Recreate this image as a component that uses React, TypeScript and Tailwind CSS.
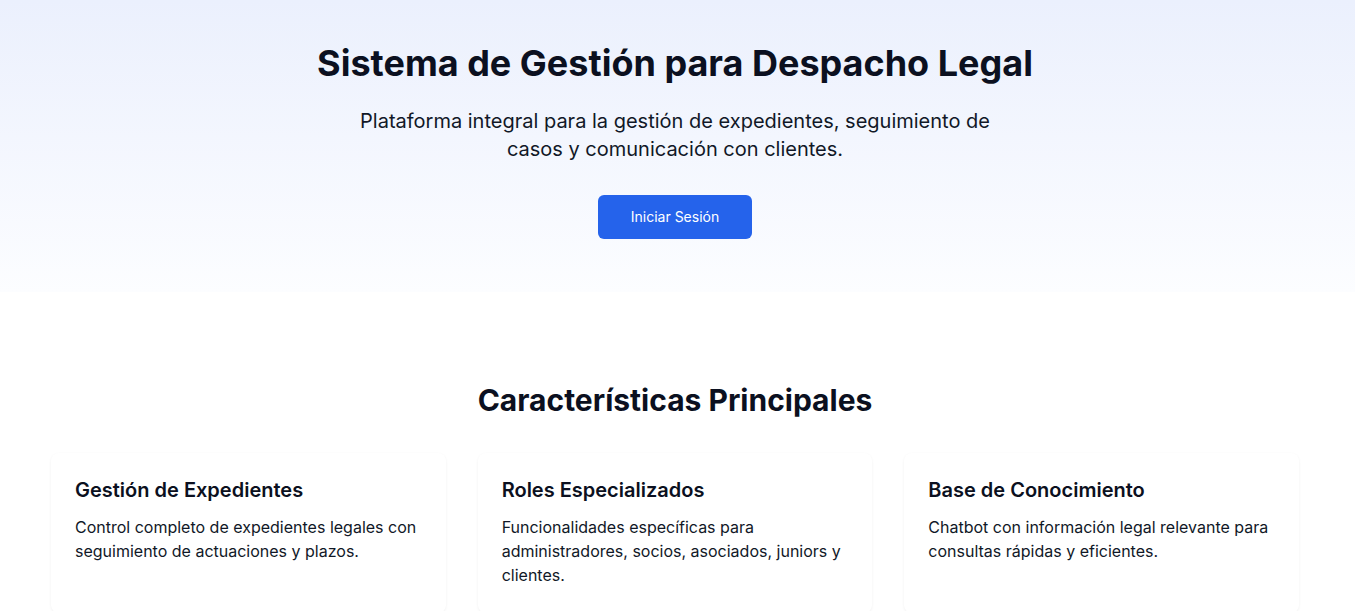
export default function App() {
  const features = [
    {
      title: "Gestión de Expedientes",
      text: "Control completo de expedientes legales con seguimiento de actuaciones y plazos.",
    },
    {
      title: "Roles Especializados",
      text: "Funcionalidades específicas para administradores, socios, asociados, juniors y clientes.",
    },
    {
      title: "Base de Conocimiento",
      text: "Chatbot con información legal relevante para consultas rápidas y eficientes.",
    },
  ];

  return (
    <div className="min-h-screen bg-white font-['Inter',sans-serif] text-[#0b1020]">
      <section className="bg-gradient-to-b from-[#ebf0fd] to-[#fcfdff] pb-[53px] pl-4 pr-[21px] pt-[43px] text-center">
        <h1 className="text-4xl font-bold">
          Sistema de Gestión para Despacho Legal
        </h1>
        <p className="mx-auto mt-6 max-w-[640px] text-xl leading-7 text-[#111827]">
          Plataforma integral para la gestión de expedientes, seguimiento de
          casos y comunicación con clientes.
        </p>
        <div className="mt-8 flex justify-center">
          <button
            type="button"
            className="h-11 w-[154px] rounded-md bg-[#2563eb] text-sm font-normal text-white"
          >
            Iniciar Sesión
          </button>
        </div>
      </section>

      <section className="pl-4 pr-[21px] pt-[90px]">
        <h2 className="text-center text-3xl font-bold">
          Características Principales
        </h2>
        <div className="mx-auto mt-[35px] grid max-w-7xl grid-cols-3 gap-8 px-4">
          {features.map((f) => (
            <div
              key={f.title}
              className="h-[160px] rounded-lg bg-white px-6 pt-[23px] shadow-[0_1px_3px_rgba(0,0,0,0.06)]"
            >
              <h3 className="text-xl font-semibold leading-7">{f.title}</h3>
              <p className="mt-[11px] text-base leading-6 text-[#111827]">
                {f.text}
              </p>
            </div>
          ))}
        </div>
      </section>
    </div>
  );
}
